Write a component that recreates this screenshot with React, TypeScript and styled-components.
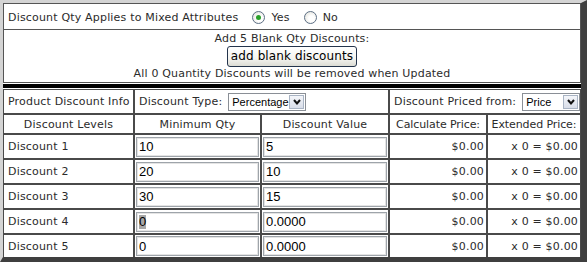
import React from "react";
import styled, { createGlobalStyle } from "styled-components";

const GlobalStyle = createGlobalStyle`
  html, body {
    margin: 0;
    padding: 0;
    background: #fff;
  }
`;

const Frame = styled.div`
  width: 587px;
  height: 262px;
  box-sizing: border-box;
  border-style: solid;
  border-width: 3px 6px 5px 3px;
  border-color: #d4d4d4 #3f3f3f #3f3f3f #d4d4d4;
  background: #fff;
  display: flex;
  flex-direction: column;
  font-family: "DejaVu Sans", Verdana, sans-serif;
  font-size: 11px;
  letter-spacing: 0.18px;
  color: #2b2b2b;
`;

const MixedRow = styled.div`
  border: 1px solid #555;
  display: flex;
  align-items: center;
  padding: 2px 0 0 4px;
  height: 23px;
`;

const RadioGroup = styled.div`
  display: flex;
  align-items: center;
  margin-left: 14px;
`;

const Radio = styled.span<{ $checked?: boolean }>`
  width: 11px;
  height: 11px;
  border-radius: 50%;
  border: 1px solid #5d6f85;
  background: radial-gradient(circle at 60% 60%, #ffffff 30%, #dcdcd4 100%);
  display: inline-flex;
  align-items: center;
  justify-content: center;
  margin: 0 6px 0 0;

  &::after {
    content: "";
    width: 5px;
    height: 5px;
    border-radius: 50%;
    background: ${(p) => (p.$checked ? "#2aa12a" : "transparent")};
  }
`;

const RadioLabel = styled.span`
  margin-right: 14px;
`;

const BlankRow = styled.div`
  height: 52px;
  border: 1px solid #555;
  border-top: none;
  display: flex;
  flex-direction: column;
  align-items: center;
`;

const Line = styled.div<{ $top?: number }>`
  height: 14px;
  line-height: 14px;
  margin-top: ${(p) => p.$top ?? 0}px;
`;

const AddButton = styled.button`
  height: 21px;
  margin: 0;
  padding: 0 3px;
  border: 1px solid #24344c;
  border-radius: 3px;
  background: linear-gradient(#ffffff, #f4f4f0 60%, #dcdcd4);
  font-family: "DejaVu Sans", Verdana, sans-serif;
  font-size: 12px;
  letter-spacing: 0.1px;
  color: #000;
  line-height: 17px;
`;

const RuleGap = styled.div`
  height: 1px;
`;

const Rule = styled.div`
  height: 4px;
  background: #000;
`;

const Grid = styled.div`
  display: grid;
  grid-template-columns: 129px 125px 126px 96px 92px;
  grid-template-rows: 23px 18px 23px 23px 23px 23px 22px;
  gap: 2px;
  padding: 1px 1px 0 1px;
  background: #4a4a4a;
`;

const Cell = styled.div<{ $span?: number; $align?: "left" | "center" | "right"; $tight?: boolean }>`
  background: #fff;
  display: flex;
  align-items: center;
  grid-column: span ${(p) => p.$span ?? 1};
  justify-content: ${(p) =>
    p.$align === "center" ? "center" : p.$align === "right" ? "flex-end" : "flex-start"};
  padding: ${(p) => (p.$align === "right" ? "0 2px 0 0" : p.$align === "center" ? "0" : "0 0 0 4px")};
  letter-spacing: ${(p) => (p.$tight ? "-0.1px" : "inherit")};
  white-space: nowrap;
  overflow: hidden;
`;

const FieldCell = styled.div`
  background: #fff;
  display: flex;
  align-items: center;
  padding: 0 1px;
`;

const Field = styled.div`
  width: 100%;
  height: 20px;
  box-sizing: border-box;
  border: 1px solid #9ea4aa;
  box-shadow: inset 0 0 0 1px #e4e4e4;
  padding-left: 2px;
  display: flex;
  align-items: center;
  font-family: "Liberation Sans", Arial, sans-serif;
  font-size: 13px;
  letter-spacing: 0;
  color: #000;
`;

const Selected = styled.span`
  background: #a8a8a8;
  line-height: 14px;
`;

const SelectLabel = styled.span`
  margin-right: 6px;
`;

const SelectBox = styled.div<{ $width: number }>`
  width: ${(p) => p.$width}px;
  height: 18px;
  box-sizing: border-box;
  border: 1px solid #8a8f96;
  display: flex;
  align-items: center;
  justify-content: space-between;
  padding: 0 1px 0 3px;
  font-family: "Liberation Sans", Arial, sans-serif;
  font-size: 11px;
  letter-spacing: 0;
  color: #000;
`;

const ArrowBox = styled.span`
  width: 15px;
  height: 14px;
  box-sizing: border-box;
  border: 1px solid #a9b4c4;
  background: linear-gradient(#f4f6fa, #d8dde8);
  display: flex;
  align-items: center;
  justify-content: center;
`;

function Select({ value, width }: { value: string; width: number }) {
  return (
    <SelectBox $width={width}>
      <span>{value}</span>
      <ArrowBox>
        <svg width="10" height="10" viewBox="0 0 10 10">
          <polyline points="2,3 5,6.5 8,3" fill="none" stroke="#111" strokeWidth="2" />
        </svg>
      </ArrowBox>
    </SelectBox>
  );
}

const rows = [
  { name: "Discount 1", qty: "10", value: "5" },
  { name: "Discount 2", qty: "20", value: "10" },
  { name: "Discount 3", qty: "30", value: "15" },
  { name: "Discount 4", qty: "0", value: "0.0000", selected: true },
  { name: "Discount 5", qty: "0", value: "0.0000" },
];

export default function App() {
  return (
    <>
      <GlobalStyle />
      <Frame>
        <MixedRow>
          Discount Qty Applies to Mixed Attributes
          <RadioGroup>
            <Radio $checked />
            <RadioLabel>Yes</RadioLabel>
            <Radio />
            <RadioLabel>No</RadioLabel>
          </RadioGroup>
        </MixedRow>
        <BlankRow>
          <Line $top={2}>Add 5 Blank Qty Discounts:</Line>
          <AddButton type="button">add blank discounts</AddButton>
          <Line>All 0 Quantity Discounts will be removed when Updated</Line>
        </BlankRow>
        <RuleGap />
        <Rule />
        <RuleGap />
        <Grid>
          <Cell>Product Discount Info</Cell>
          <Cell $span={2}>
            <SelectLabel>Discount Type:</SelectLabel>
            <Select value="Percentage" width={78} />
          </Cell>
          <Cell $span={2}>
            <SelectLabel>Discount Priced from:</SelectLabel>
            <Select value="Price" width={58} />
          </Cell>

          <Cell $align="center">Discount Levels</Cell>
          <Cell $align="center">Minimum Qty</Cell>
          <Cell $align="center">Discount Value</Cell>
          <Cell $align="center" $tight>Calculate Price:</Cell>
          <Cell $align="center" $tight>Extended Price:</Cell>

          {rows.map((r) => (
            <React.Fragment key={r.name}>
              <Cell>{r.name}</Cell>
              <FieldCell>
                <Field>{r.selected ? <Selected>{r.qty}</Selected> : r.qty}</Field>
              </FieldCell>
              <FieldCell>
                <Field>{r.value}</Field>
              </FieldCell>
              <Cell $align="right">$0.00</Cell>
              <Cell $align="right">x 0 = $0.00</Cell>
            </React.Fragment>
          ))}
        </Grid>
      </Frame>
    </>
  );
}
